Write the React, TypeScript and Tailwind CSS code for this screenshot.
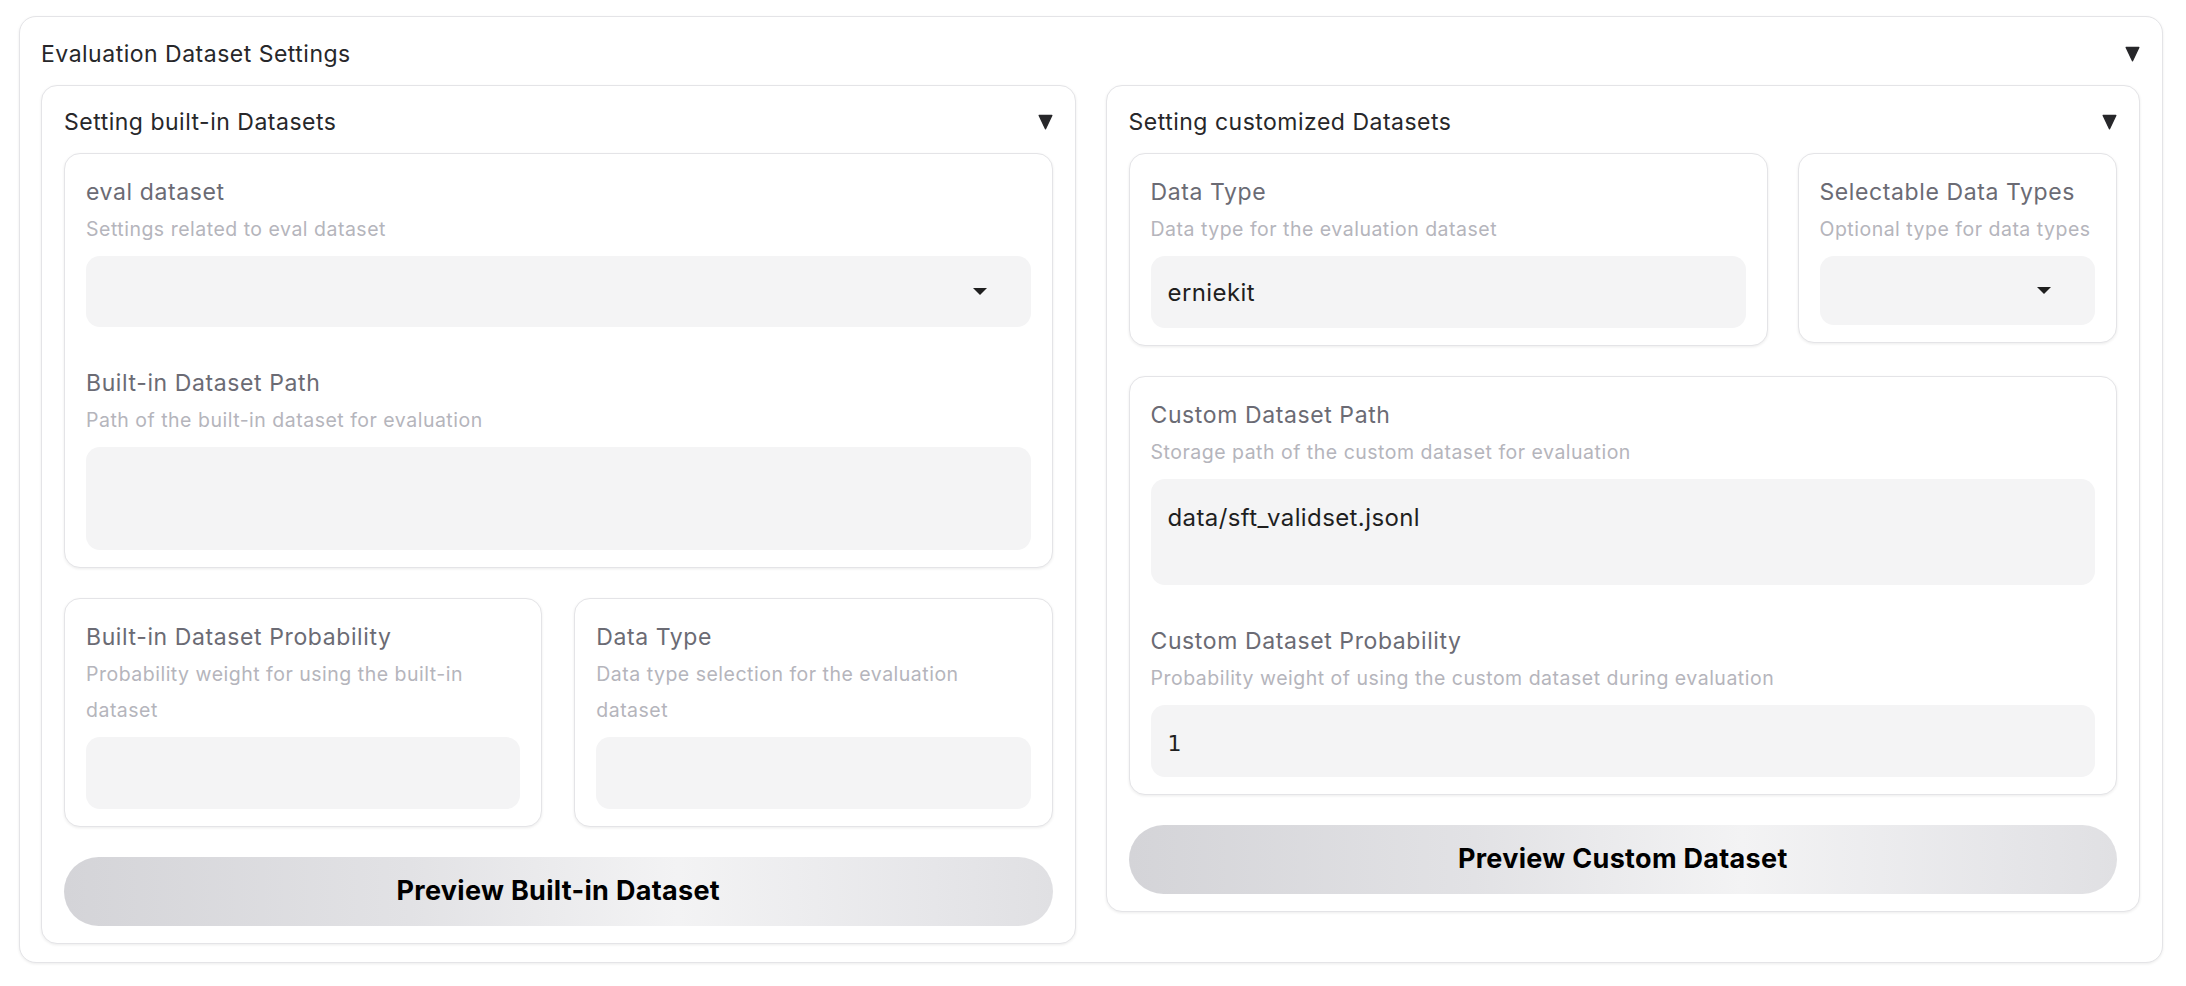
import type { ReactNode } from "react";

function Caret() {
  return (
    <svg width="15" height="16" viewBox="0 0 15 16" className="shrink-0">
      <path d="M1.2 1.5h12.6L7.5 14.8z" fill="#27272a" stroke="#27272a" strokeWidth="1.4" strokeLinejoin="round" />
    </svg>
  );
}

function SelectArrow() {
  return (
    <svg width="14" height="7" viewBox="0 0 14 7">
      <path d="M0 0h14L7 7z" fill="#1f1f1f" />
    </svg>
  );
}

function Box({ children, className = "" }: { children: ReactNode; className?: string }) {
  return (
    <div
      className={`rounded-[16px] border border-[#e4e4e7] bg-white px-[21px] pt-[22px] pb-[17px] shadow-[0_1px_3px_rgba(0,0,0,0.08)] ${className}`}
    >
      {children}
    </div>
  );
}

function Field({ label, info, children, className = "" }: { label: string; info: ReactNode; children: ReactNode; className?: string }) {
  return (
    <div className={className}>
      <div className="pt-[2px] text-[23px] leading-[28px] tracking-[0.6px] text-[#6b6b74]">{label}</div>
      <div className="mt-[5px] text-[19.5px] leading-[36px] tracking-[0.5px] text-[#b5b5bc]">{info}</div>
      <div className="mt-[9px]">{children}</div>
    </div>
  );
}

function Input({ value = "", h = "h-[72px]", mono = false }: { value?: string; h?: string; mono?: boolean }) {
  return (
    <div
      className={`flex ${h} items-center rounded-[14px] bg-[#f4f4f5] px-[17px] text-[#1f1f1f] ${
        mono ? "pt-[4px] font-['DejaVu_Sans',sans-serif] text-[22px]" : "pt-[2px] text-[24px] tracking-[0.4px]"
      }`}
    >
      {value}
    </div>
  );
}

function TextArea({ value = "", h }: { value?: string; h: string }) {
  return (
    <div className={`${h} rounded-[14px] bg-[#f4f4f5] px-[17px] pt-[25px] text-[24px] leading-[28px] tracking-[0.4px] text-[#1f1f1f]`}>
      {value}
    </div>
  );
}

function Select({ h = "h-[71px]" }: { h?: string }) {
  return (
    <div className={`flex ${h} items-center justify-end rounded-[14px] bg-[#f4f4f5] pr-[44px]`}>
      <SelectArrow />
    </div>
  );
}

function Card({ title, children }: { title: string; children: ReactNode }) {
  return (
    <div className="flex-1 rounded-[16px] border border-[#e4e4e7] bg-white px-[22px] pt-[22px] pb-[17px] shadow-[0_1px_3px_rgba(0,0,0,0.08)]">
      <div className="flex h-[28px] items-center justify-between">
        <span className="text-[23px] leading-[28px] tracking-[0.5px] text-[#27272a]">{title}</span>
        <Caret />
      </div>
      <div className="mt-[17px] flex flex-col gap-[30px]">{children}</div>
    </div>
  );
}

function PreviewButton({ label }: { label: string }) {
  return (
    <button className="h-[69px] w-full rounded-full bg-[linear-gradient(90deg,#d4d4d8_0%,#e2e2e5_35%,#f3f3f4_62%,#e6e6e9_88%,#e0e0e3_100%)] text-[27px] font-bold tracking-[0.3px] text-black">
      {label}
    </button>
  );
}

export default function App() {
  return (
    <div className="min-h-screen bg-white pt-[16px] pl-[19px] font-['Inter',sans-serif]">
      <div className="w-[2144px] rounded-[17px] border border-[#e4e4e7] bg-white pt-[23px] pr-[22px] pb-[18px] pl-[21px] shadow-[0_1px_3px_rgba(0,0,0,0.08)]">
        <div className="flex h-[28px] items-center justify-between">
          <span className="text-[23px] leading-[28px] tracking-[0.5px] text-[#27272a]">Evaluation Dataset Settings</span>
          <Caret />
        </div>

        <div className="mt-[17px] flex items-start gap-[30px]">
          <Card title="Setting built-in Datasets">
            <Box>
              <Field label="eval dataset" info="Settings related to eval dataset">
                <Select />
              </Field>
              <Field className="mt-[40px]" label="Built-in Dataset Path" info="Path of the built-in dataset for evaluation">
                <TextArea h="h-[103px]" />
              </Field>
            </Box>
            <div className="grid grid-cols-2 gap-[32px]">
              <Box>
                <Field
                  label="Built-in Dataset Probability"
                  info={
                    <>
                      Probability weight for using the built-in
                      <br />
                      dataset
                    </>
                  }
                >
                  <Input />
                </Field>
              </Box>
              <Box>
                <Field
                  label="Data Type"
                  info={
                    <>
                      Data type selection for the evaluation
                      <br />
                      dataset
                    </>
                  }
                >
                  <Input />
                </Field>
              </Box>
            </div>
            <PreviewButton label="Preview Built-in Dataset" />
          </Card>

          <Card title="Setting customized Datasets">
            <div className="grid grid-cols-[2fr_1fr] items-start gap-[30px]">
              <Box>
                <Field label="Data Type" info="Data type for the evaluation dataset">
                  <Input value="erniekit" />
                </Field>
              </Box>
              <Box>
                <Field label="Selectable Data Types" info={<span className="whitespace-nowrap">Optional type for data types</span>}>
                  <Select h="h-[69px]" />
                </Field>
              </Box>
            </div>
            <Box>
              <Field label="Custom Dataset Path" info="Storage path of the custom dataset for evaluation">
                <TextArea h="h-[106px]" value="data/sft_validset.jsonl" />
              </Field>
              <Field className="mt-[40px]" label="Custom Dataset Probability" info="Probability weight of using the custom dataset during evaluation">
                <Input value="1" mono />
              </Field>
            </Box>
            <PreviewButton label="Preview Custom Dataset" />
          </Card>
        </div>
      </div>
    </div>
  );
}
